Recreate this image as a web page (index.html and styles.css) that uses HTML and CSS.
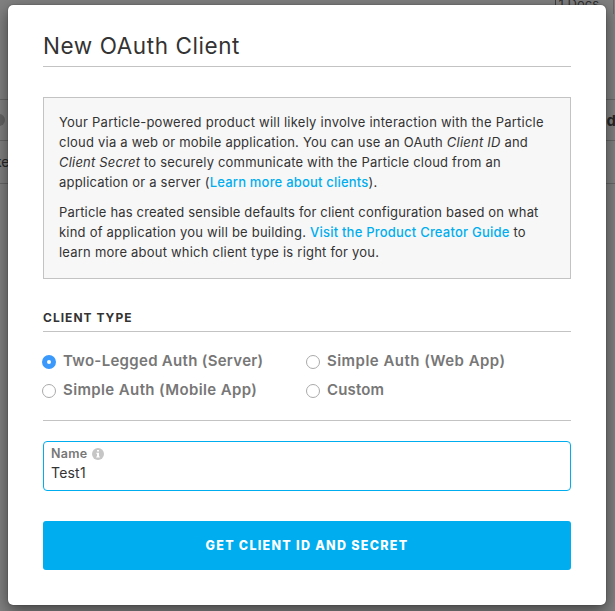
FILE: index.html
```
<!DOCTYPE html>
<html lang="en">
<head>
<meta charset="utf-8">
<title>New OAuth Client</title>
<link rel="stylesheet" href="styles.css">
</head>
<body>
<div class="page" aria-hidden="true">
  <div class="page-nav"><span class="docs"><span class="docs-icon">1</span> Docs</span></div>
  <div class="page-head"><span class="dot"></span><b>d</b></div>
  <div class="page-row">ke</div>
</div>
<main class="modal">
  <h1>New OAuth Client</h1>
  <section class="info">
    <p>
      <span class="line l1">Your Particle-powered product will likely involve interaction with the Particle</span>
      <span class="line l2">cloud via a web or mobile application. You can use an OAuth <em>Client ID</em> and</span>
      <span class="line l3"><em>Client Secret</em> to securely communicate with the Particle cloud from an</span>
      <span class="line l4">application or a server (<a>Learn more about clients</a>).</span>
    </p>
    <p>
      <span class="line l5">Particle has created sensible defaults for client configuration based on what</span>
      <span class="line l6">kind of application you will be building. <a>Visit the Product Creator Guide</a> to</span>
      <span class="line l7">learn more about which client type is right for you.</span>
    </p>
  </section>
  <h2><span>CLIENT TYPE</span></h2>
  <div class="options">
    <label><i class="radio checked"></i><span class="o1">Two-Legged Auth (Server)</span></label>
    <label><i class="radio"></i><span class="o2">Simple Auth (Web App)</span></label>
    <label><i class="radio"></i><span class="o3">Simple Auth (Mobile App)</span></label>
    <label><i class="radio"></i><span class="o4">Custom</span></label>
  </div>
  <div class="field">
    <div class="field-label"><span>Name</span>
      <svg width="12" height="12" viewBox="0 0 12 12"><circle cx="6" cy="6" r="6" fill="#c6c6c6"/><path d="M5 2h2v1.5H5zM4.3 4.7H7v3.8h.8v1H4.2v-1H5V5.7h-.7z" fill="#fff"/></svg>
    </div>
    <div class="field-value">Test1</div>
  </div>
  <button class="submit"><span>GET CLIENT ID AND SECRET</span></button>
</main>
</body>
</html>
```
FILE: styles.css
```
* { box-sizing: border-box; }
body {
  margin: 0;
  width: 615px;
  height: 611px;
  overflow: hidden;
  background: #808080;
  font-family: Inter, "Liberation Sans", sans-serif;
  color: #333;
}
.page { position: absolute; inset: 0; overflow: hidden; color: #272727; }
.page-nav {
  height: 14px;
  margin-right: 1px;
  border-right: 1px solid #686868;
  display: flex;
  justify-content: flex-end;
  padding-right: 14px;
  font-size: 13px;
  line-height: 14px;
}
.docs { margin-top: -3px; color: #303030; letter-spacing: 0; }
.docs-icon { border-left: 1px solid #404040; padding: 0 0 0 3px; }
.page-head {
  margin-top: 85px;
  height: 42px;
  border-top: 1px solid #666;
  border-bottom: 1px solid #666;
  display: flex;
  align-items: center;
  justify-content: space-between;
  font-size: 15px;
}
.page-head b { margin-right: -1px; }
.dot { width: 12px; height: 12px; margin-left: -7px; border-radius: 50%; background: #636363; }
.page-row { height: 43px; border-bottom: 1px solid #666; line-height: 42px; font-size: 14px; text-indent: -6px; }
.modal {
  position: relative;
  width: 598px;
  height: 600px;
  margin: 5px 0 0 8px;
  padding: 25px 35px 35px;
  border-radius: 5px;
  background: #fff;
  box-shadow: 0 5px 15px rgba(0, 0, 0, .5), 0 0 1px rgba(0, 0, 0, .8);
}
h1 {
  margin: 0;
  height: 37px;
  border-bottom: 1px solid #c3c3c3;
  font-size: 22.5px;
  line-height: 31px;
  font-weight: 400;
  letter-spacing: .58px;
  white-space: nowrap;
}
.info {
  margin-top: 30px;
  height: 182px;
  padding: 14px 15px 15px;
  border: 1px solid #c3c3c3;
  background: #f7f7f7;
  font-size: 13px;
  line-height: 20px;
}
.info p { margin: 0 0 10px; }
.line { display: block; white-space: nowrap; letter-spacing: .2px; }
.l1 { letter-spacing: .238px; }
.l2 { letter-spacing: .22px; }
.l5 { letter-spacing: .165px; }
.l6, .l7 { letter-spacing: .215px; }
a { color: #00aeef; font-weight: 500; }
h2 {
  margin: 31px 0 0;
  height: 22px;
  border-bottom: 1px solid #c3c3c3;
  font-size: 12px;
  line-height: 16px;
  font-weight: 700;
  letter-spacing: 1.02px;
}
.options {
  height: 89px;
  padding-top: 14px;
  border-bottom: 1px solid #c3c3c3;
  display: grid;
  grid-template-columns: 264px 264px;
  grid-auto-rows: 29px;
  color: #777;
  font-size: 15px;
  font-weight: 600;
  line-height: 29px;
}
.options label { display: flex; align-items: center; white-space: nowrap; letter-spacing: .3px; }
.o2 { letter-spacing: .47px; }
.o3 { letter-spacing: .38px; }
.o4 { letter-spacing: .15px; }
.radio {
  width: 14px;
  height: 14px;
  margin: 2px 7px 0 -1px;
  border: 1px solid #aaa;
  border-radius: 50%;
  background: #fff;
}
.radio.checked { border: 5px solid #3b99fc; }
.field {
  margin-top: 20px;
  height: 50px;
  border: 1px solid #00aeef;
  border-radius: 4px;
  padding: 3px 7px;
}
.field-label {
  display: flex;
  align-items: center;
  gap: 4px;
  height: 17px;
  font-size: 12.5px;
  font-weight: 600;
  letter-spacing: .3px;
  color: #777;
}
.field-value { height: 22px; line-height: 22px; font-size: 14px; letter-spacing: .2px; }
.submit {
  display: block;
  width: 100%;
  height: 49px;
  margin-top: 30px;
  padding: 0;
  border: 0;
  border-radius: 3px;
  background: #00aeef;
  color: #fff;
  font: 800 12.5px/49px Inter, "Liberation Sans", sans-serif;
  letter-spacing: 1.27px;
}
```
